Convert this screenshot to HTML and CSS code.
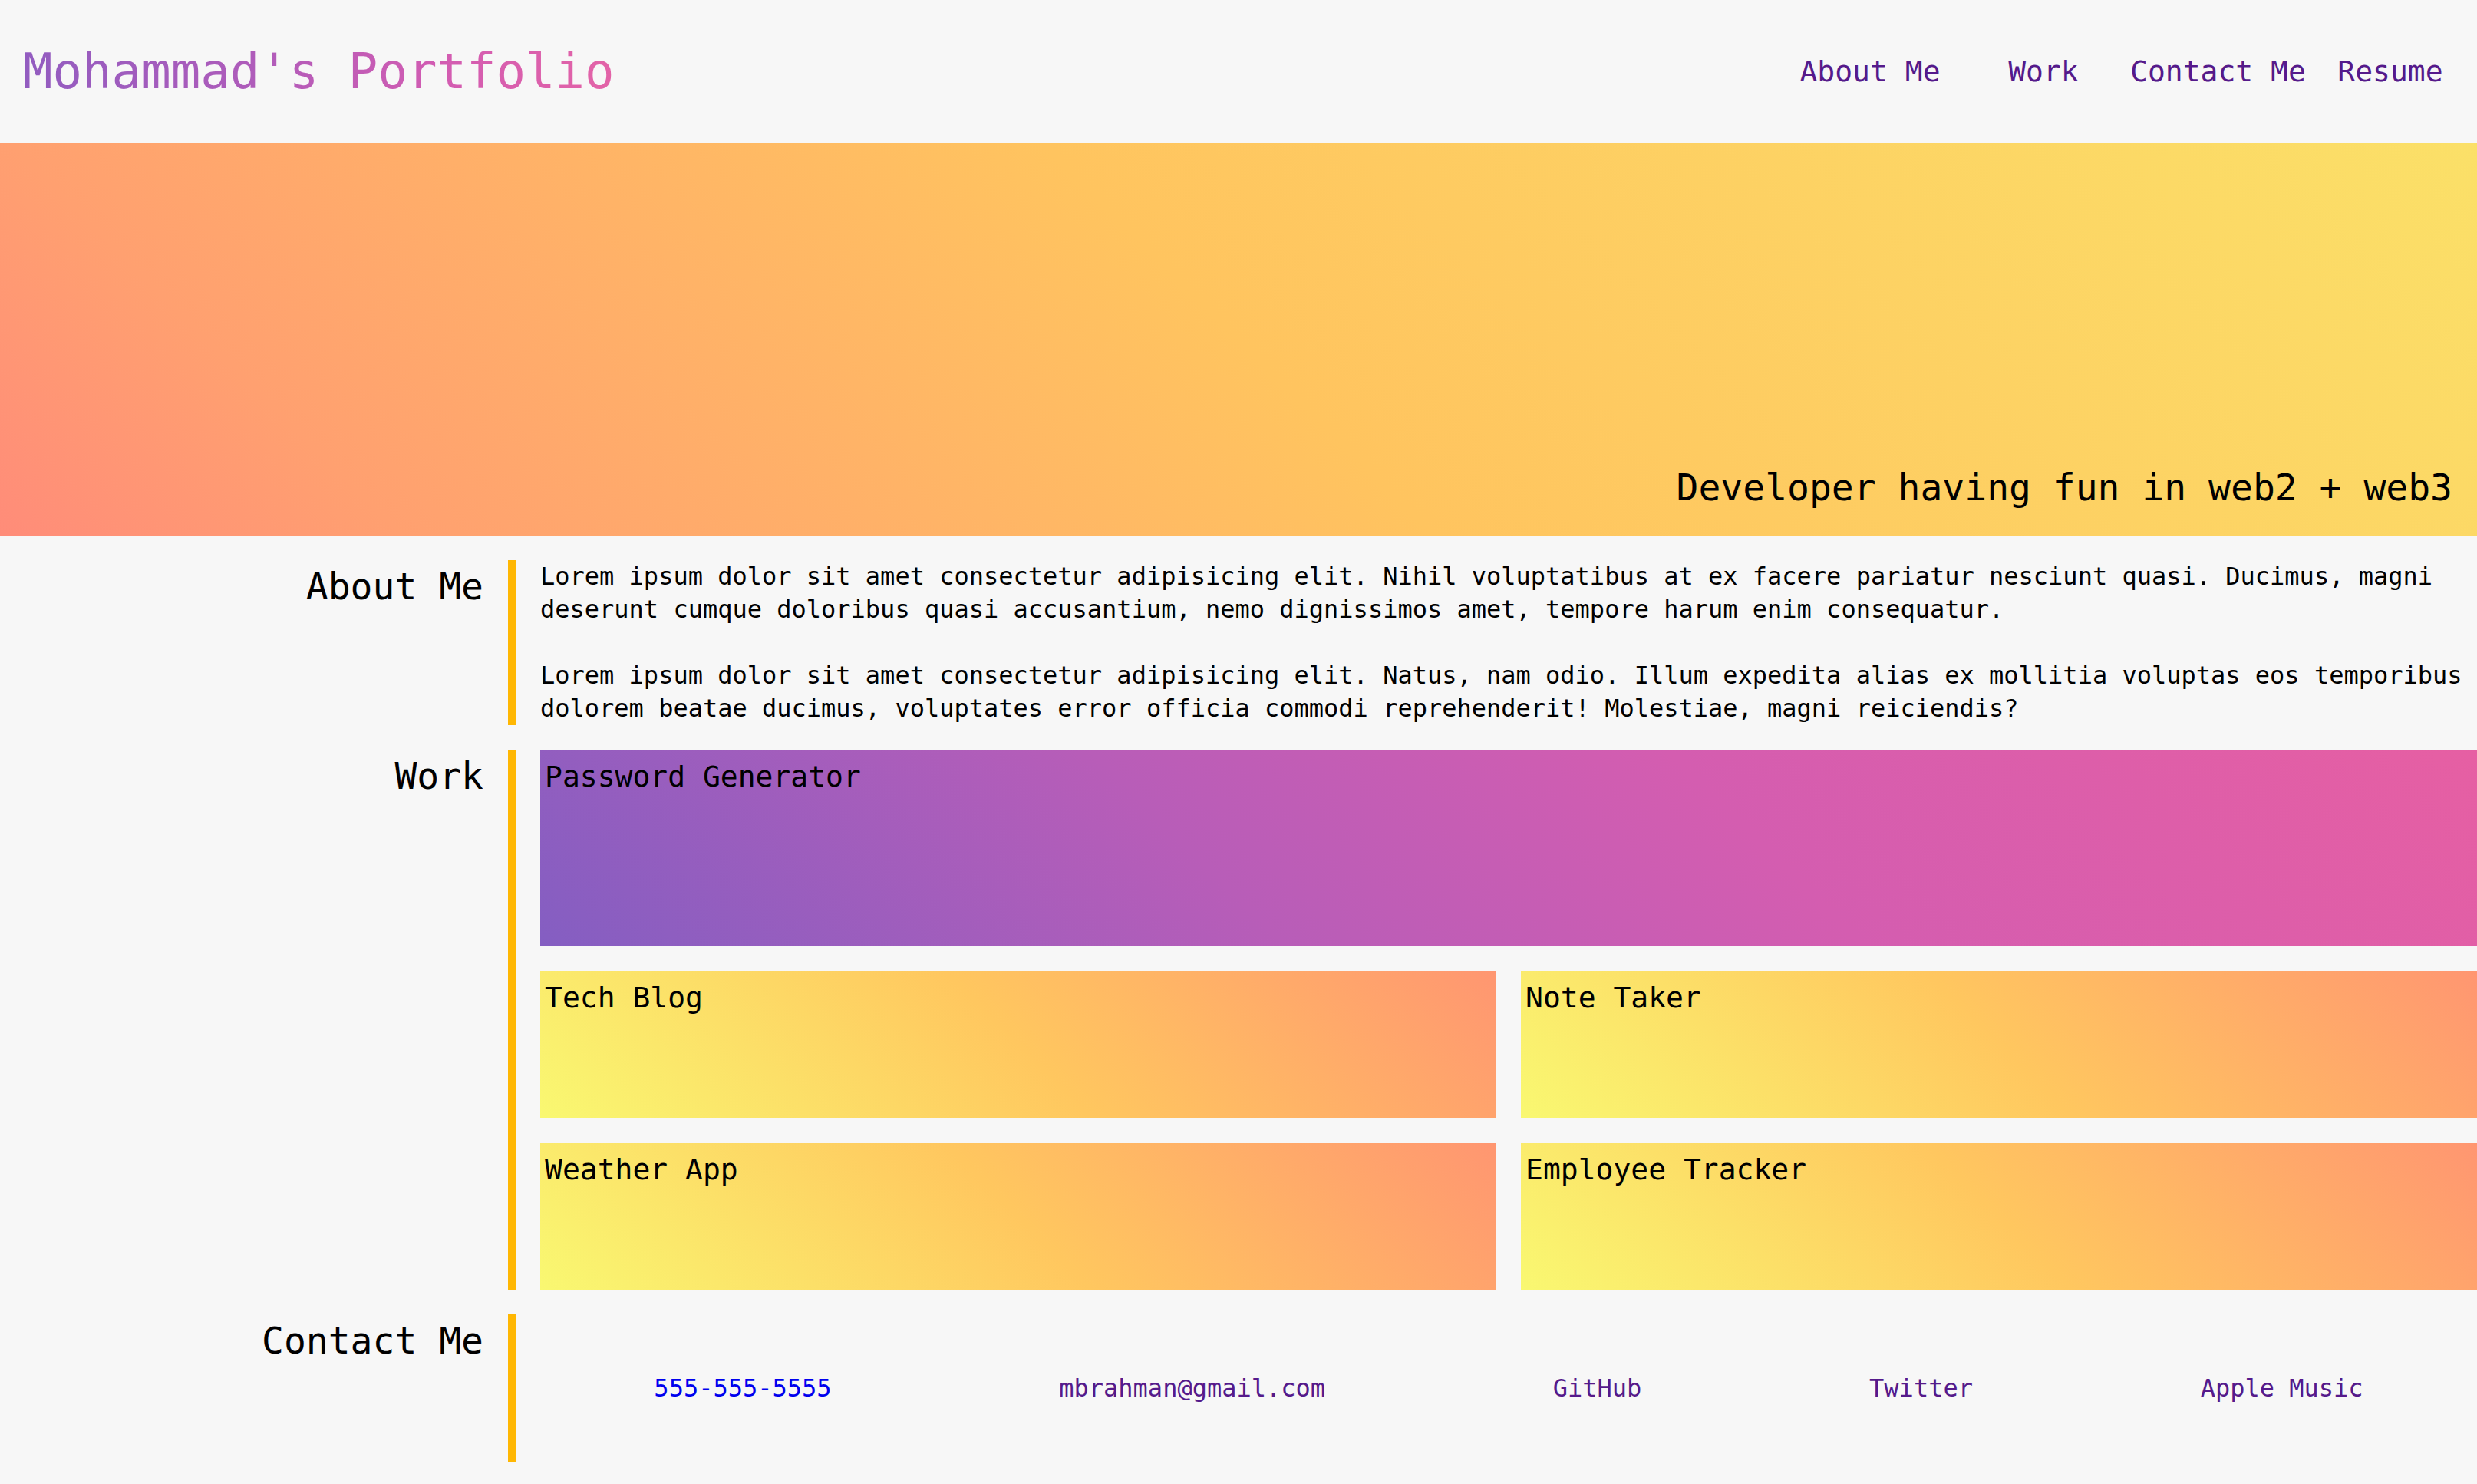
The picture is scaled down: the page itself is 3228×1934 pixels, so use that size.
FILE: index.html
```html
<!DOCTYPE html>
<html lang="en">
<head>
<meta charset="utf-8">
<title>Mohammad's Portfolio</title>
<link rel="stylesheet" href="styles.css">
</head>
<body>
<header class="site-header">
  <h1 class="brand"><span class="brand-text">Mohammad's Portfolio</span></h1>
  <nav class="nav">
    <a class="nav-link" href="#about">About Me</a>
    <a class="nav-link" href="#work">Work</a>
    <a class="nav-link" href="#contact">Contact Me</a>
    <a class="nav-link" href="#resume">Resume</a>
  </nav>
</header>

<section class="hero">
  <p class="hero-tagline">Developer having fun in web2 + web3</p>
</section>

<main class="content">
  <section class="block" id="about">
    <h2 class="block-title">About Me</h2>
    <div class="block-body">
      <p class="about-text">Lorem ipsum dolor sit amet consectetur adipisicing elit. Nihil voluptatibus at ex facere pariatur nesciunt quasi. Ducimus, magni deserunt cumque doloribus quasi accusantium, nemo dignissimos amet, tempore harum enim consequatur.<br><br>Lorem ipsum dolor sit amet consectetur adipisicing elit. Natus, nam odio. Illum expedita alias ex mollitia voluptas eos temporibus dolorem beatae ducimus, voluptates error officia commodi reprehenderit! Molestiae, magni reiciendis?</p>
    </div>
  </section>

  <section class="block" id="work">
    <h2 class="block-title">Work</h2>
    <div class="block-body work-grid">
      <div class="project project-featured"><h3 class="project-title">Password Generator</h3></div>
      <div class="project"><h3 class="project-title">Tech Blog</h3></div>
      <div class="project"><h3 class="project-title">Note Taker</h3></div>
      <div class="project"><h3 class="project-title">Weather App</h3></div>
      <div class="project"><h3 class="project-title">Employee Tracker</h3></div>
    </div>
  </section>

  <section class="block" id="contact">
    <h2 class="block-title">Contact Me</h2>
    <div class="block-body contact-list">
      <a class="contact-link contact-new" href="#phone">555-555-5555</a>
      <a class="contact-link" href="#email">mbrahman@gmail.com</a>
      <a class="contact-link" href="#github">GitHub</a>
      <a class="contact-link" href="#twitter">Twitter</a>
      <a class="contact-link" href="#music">Apple Music</a>
    </div>
  </section>
</main>
</body>
</html>
```

FILE: styles.css
```css
html, body {
  margin: 0;
  padding: 0;
  background: #f7f7f7;
}

body {
  font-family: "DejaVu Sans Mono", "Liberation Mono", monospace;
  color: #000;
  overflow-x: hidden;
}

.site-header {
  height: 186px;
  display: flex;
  align-items: center;
  justify-content: space-between;
  padding-left: 30px;
}

.brand {
  margin: 0;
  font-size: 64px;
  font-weight: normal;
  line-height: normal;
}

.brand-text {
  background: linear-gradient(90deg, #925cc0 0%, #b05cba 40%, #d25cb2 70%, #e363a7 100%);
  -webkit-background-clip: text;
  background-clip: text;
  color: transparent;
}

.nav {
  display: grid;
  grid-template-columns: repeat(4, 226px);
}

.nav-link {
  font-size: 38px;
  line-height: normal;
  color: #551a8b;
  text-decoration: none;
  text-align: center;
  white-space: nowrap;
}

.hero {
  height: 512px;
  box-sizing: border-box;
  display: flex;
  align-items: flex-end;
  justify-content: flex-end;
  padding: 0 32px 35px;
  background: linear-gradient(45deg, #ff8c79 0%, #ffa070 14%, #ffc45f 50%, #fbe068 100%);
}

.hero-tagline {
  margin: 0;
  font-size: 48px;
  line-height: normal;
}

.content {
  display: flex;
  flex-direction: column;
  gap: 32px;
  padding: 32px 0 32px;
}

.block {
  display: flex;
  align-items: stretch;
}

.block-title {
  flex: 0 0 630px;
  margin: 0 32px 0 0;
  padding-top: 6px;
  font-size: 48px;
  font-weight: normal;
  line-height: normal;
  text-align: right;
}

.block-body {
  flex: 1;
  min-width: 0;
  border-left: 10px solid #ffb703;
  padding-left: 32px;
}

.about-text {
  margin: 0;
  font-size: 32px;
  line-height: 43px;
}

.work-grid {
  display: grid;
  grid-template-columns: 1fr 1fr;
  grid-template-rows: 256px 192px 192px;
  gap: 32px;
}

.project {
  padding: 13px 6px;
  background: linear-gradient(45deg, #f9f871 0%, #ffc75f 50%, #ff9671 100%);
}

.project-featured {
  grid-column: 1 / -1;
  background: linear-gradient(45deg, #845ec2 0%, #b85db8 35%, #d45db0 62%, #e65fa3 100%);
}

.project-title {
  margin: 0;
  font-size: 38px;
  font-weight: normal;
  line-height: normal;
}

.contact-list {
  height: 192px;
  display: flex;
  align-items: center;
  justify-content: space-around;
}

.contact-link {
  font-size: 32px;
  line-height: normal;
  color: #551a8b;
  text-decoration: none;
}

.contact-new {
  color: #0000ee;
}
```
